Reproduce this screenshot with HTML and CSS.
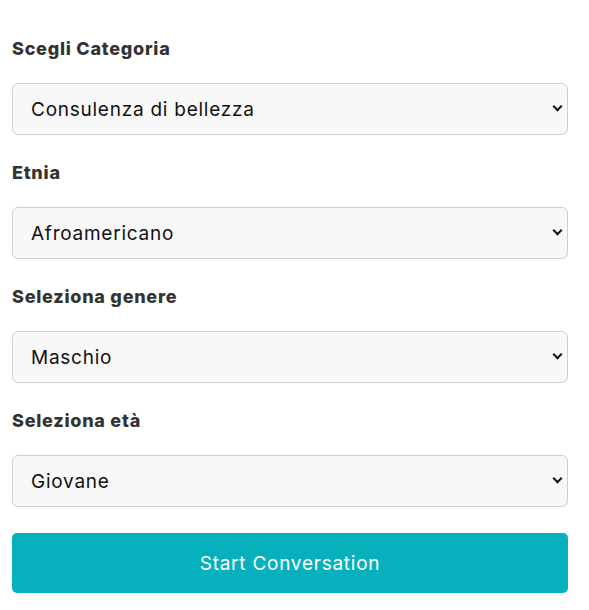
FILE: index.html
```html
<!DOCTYPE html>
<html lang="it">
<head>
    <meta charset="UTF-8">
    <meta name="viewport" content="width=device-width, initial-scale=1.0">
    <title>Start Conversation</title>
    <link rel="stylesheet" href="styles.css">
</head>
<body>

<form class="chat-form">
    <div class="form-group">
        <label for="category">Scegli Categoria</label>
        <div class="select-wrap">
            <select id="category">
                <option>Consulenza di bellezza</option>
                <option>Consulenza di stile</option>
            </select>
        </div>
    </div>

    <div class="form-group">
        <label for="ethnicity">Etnia</label>
        <div class="select-wrap">
            <select id="ethnicity">
                <option>Afroamericano</option>
                <option>Asiatico</option>
                <option>Caucasico</option>
            </select>
        </div>
    </div>

    <div class="form-group">
        <label for="gender">Seleziona genere</label>
        <div class="select-wrap">
            <select id="gender">
                <option>Maschio</option>
                <option>Femmina</option>
            </select>
        </div>
    </div>

    <div class="form-group">
        <label for="age">Seleziona età</label>
        <div class="select-wrap">
            <select id="age">
                <option>Giovane</option>
                <option>Adulto</option>
                <option>Anziano</option>
            </select>
        </div>
    </div>

    <button type="button" class="start-button">Start Conversation</button>
</form>

</body>
</html>
```

FILE: styles.css
```css
body {
    margin: 0;
    font-family: Inter, "DejaVu Sans", sans-serif;
    background-color: #fff;
    color: #333;
}
.chat-form {
    width: 556px;
    padding: 37px 0 0 12px;
}
.form-group {
    margin-bottom: 26px;
}
.form-group label {
    display: block;
    font-size: 18px;
    font-weight: 800;
    letter-spacing: 0.75px;
    line-height: 24px;
    margin-bottom: 22px;
}
.select-wrap {
    position: relative;
}
/* chevron drawn over the select */
.select-wrap::after {
    content: "";
    position: absolute;
    top: 20px;
    right: 7px;
    width: 5px;
    height: 5px;
    border-right: 2.5px solid #111;
    border-bottom: 2.5px solid #111;
    transform: rotate(45deg);
    pointer-events: none;
}
.select-wrap select {
    display: block;
    width: 100%;
    height: 52px;
    padding: 0 30px 0 18px;
    font-family: inherit;
    font-size: 19px;
    letter-spacing: 0.75px;
    color: #111;
    background-color: #f8f8f8;
    border: 1px solid #cfcfcf;
    border-radius: 6px;
    appearance: none;
    -webkit-appearance: none;
}
.start-button {
    display: block;
    width: 100%;
    height: 60px;
    font-family: inherit;
    font-size: 19px;
    letter-spacing: 0.75px;
    color: #fff;
    background-color: #06b1bd;
    border: none;
    border-radius: 5px;
    cursor: pointer;
}
```
